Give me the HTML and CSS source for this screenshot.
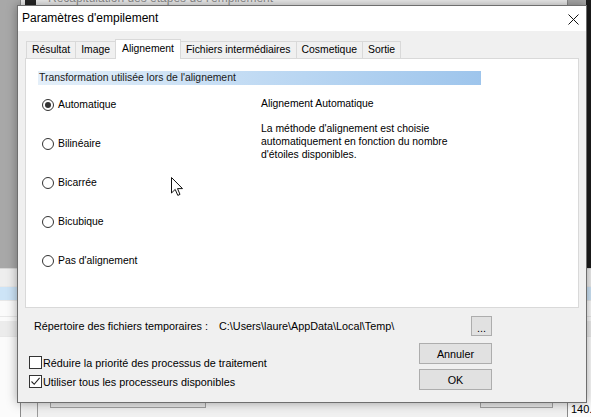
FILE: index.html
```html
<!DOCTYPE html>
<html>
<head>
    <title>Paramètres d'empilement</title>
    <link rel="stylesheet" href="styles.css">
</head>
<body>
    <div class="desktop">
        <!-- main window behind everything: grey pane + file list -->
        <div class="gray-pane"></div>
        <div class="main-list">
            <div class="list-row row-head"></div>
            <div class="list-row row-sel"></div>
            <div class="list-row"></div>
            <div class="list-row row-alt"></div>
            <span class="list-value">140.</span>
        </div>

        <!-- summary window, mostly hidden by the dialog -->
        <div class="back-window">
            <div class="back-titlebar">
                <span class="back-icon"></span>
                <span class="back-title">Récapitulation des étapes de l'empilement</span>
            </div>
            <div class="back-line"></div>
            <div class="back-btn back-btn-left"></div>
            <div class="back-btn back-btn-right"></div>
        </div>

        <div class="dialog">
            <div class="titlebar">
                <span class="title">Paramètres d'empilement</span>
                <svg class="close" width="11" height="11" viewBox="0 0 11 11">
                    <path d="M0.5 0.5 L10.5 10.5 M10.5 0.5 L0.5 10.5" stroke="#111" stroke-width="1" fill="none"/>
                </svg>
            </div>

            <div class="dialog-body">
                <div class="tabs">
                    <div class="tab">Résultat</div>
                    <div class="tab">Image</div>
                    <div class="tab active">Alignement</div>
                    <div class="tab">Fichiers intermédiaires</div>
                    <div class="tab">Cosmetique</div>
                    <div class="tab">Sortie</div>
                </div>

                <div class="tab-panel">
                    <div class="group-header">Transformation utilisée lors de l'alignement</div>
                    <div class="options">
                        <div class="radios">
                            <label class="radio-row"><span class="radio checked"></span>Automatique</label>
                            <label class="radio-row"><span class="radio"></span>Bilinéaire</label>
                            <label class="radio-row"><span class="radio"></span>Bicarrée</label>
                            <label class="radio-row"><span class="radio"></span>Bicubique</label>
                            <label class="radio-row"><span class="radio"></span>Pas d'alignement</label>
                        </div>
                        <div class="desc">
                            <div class="desc-title">Alignement Automatique</div>
                            <p class="desc-text">La méthode d'alignement est choisie<br>automatiquement en fonction du nombre<br>d'étoiles disponibles.</p>
                        </div>
                    </div>
                </div>

                <div class="dir-row">
                    <span>Répertoire des fichiers temporaires :</span>
                    <span class="dir-path">C:\Users\laure\AppData\Local\Temp\</span>
                    <button class="btn btn-browse">...</button>
                </div>

                <div class="bottom-row">
                    <div class="checks">
                        <label class="check-row"><span class="checkbox"></span>Réduire la priorité des processus de traitement</label>
                        <label class="check-row">
                            <span class="checkbox">
                                <svg width="11" height="11" viewBox="0 0 11 11">
                                    <path d="M1.5 5.5 L4.2 8.3 L9.6 1.8" stroke="#222" stroke-width="1.1" fill="none"/>
                                </svg>
                            </span>Utiliser tous les processeurs disponibles
                        </label>
                    </div>
                    <div class="actions">
                        <button class="btn">Annuler</button>
                        <button class="btn">OK</button>
                    </div>
                </div>
            </div>
        </div>

        <!-- mouse pointer -->
        <svg class="cursor" width="13" height="20" viewBox="0 0 13 20">
            <path d="M0.5 0.5 L0.5 16 L4.2 12.4 L6.8 18.4 L9 17.4 L6.5 11.6 L11.5 11.6 Z" fill="#fff" stroke="#111" stroke-width="1"/>
        </svg>
    </div>
</body>
</html>
```

FILE: styles.css
```css
* {
    box-sizing: border-box;
}
body {
    margin: 0;
    width: 591px;
    height: 417px;
    overflow: hidden;
    background: #1c1c1c;
    font-family: "Liberation Sans", Arial, sans-serif;
    color: #000;
}
.desktop {
    position: relative;
    width: 591px;
    height: 417px;
    overflow: hidden;
}

/* background windows */
.gray-pane {
    position: absolute;
    left: 0;
    top: 0;
    width: 586px;
    height: 268px;
    background: #a8a8a8;
}
.main-list {
    position: absolute;
    left: 0;
    top: 268px;
    width: 591px;
    height: 149px;
    background: #fbfbfb;
    border-top: 1px solid #d6d6d6;
}
.list-row {
    height: 16px;
    border-bottom: 1px solid #e8e8e8;
}
.row-head {
    height: 18px;
    background: #eeeeee;
}
.row-sel {
    height: 14px;
    background: #cde4f7;
}
.row-alt {
    margin-top: 4px;
    background: #ececec;
}
.list-value {
    position: absolute;
    left: 571px;
    top: 134px;
    font-size: 11px;
}
.back-window {
    position: absolute;
    left: 20px;
    top: -25px;
    width: 548px;
    height: 445px;
    background: #f0f0f0;
    border: 1px solid #8a8a8a;
}
.back-titlebar {
    display: flex;
    align-items: flex-end;
    height: 33px;
    background: #ececec;
}
.back-icon {
    width: 11px;
    height: 16px;
    margin-left: 4px;
    background: #262626;
}
.back-title {
    margin-left: 12px;
    margin-bottom: 4px;
    font-size: 12px;
    line-height: 14px;
    color: #8c8c8c;
}
.back-line {
    position: absolute;
    left: 16px;
    top: 425px;
    width: 1px;
    height: 30px;
    background: #9a9a9a;
}
.back-btn {
    position: absolute;
    top: 405px;
    height: 27px;
    border: 1px solid #a0a0a0;
    background: #e6e6e6;
}
.back-btn-left {
    left: 29px;
    width: 156px;
}
.back-btn-right {
    left: 459px;
    width: 73px;
}

/* dialog */
.dialog {
    position: absolute;
    left: 17px;
    top: 5px;
    width: 570px;
    height: 398px;
    border: 1px solid #6e6e6e;
    background: #f0f0f0;
    box-shadow: 0 0 10px rgba(0, 0, 0, 0.35);
    display: flex;
    flex-direction: column;
}
.titlebar {
    display: flex;
    align-items: center;
    justify-content: space-between;
    height: 25px;
    padding: 0 7px 0 4px;
    background: #fff;
    font-size: 12px;
}
.title {
    margin-top: -1px;
}
.close {
    margin-top: 1px;
}
.dialog-body {
    flex: 1;
    padding: 8px 7px 0 7px;
    font-size: 10.4px;
}

.tabs {
    display: flex;
    align-items: flex-end;
    height: 19px;
    padding-left: 1px;
    position: relative;
    z-index: 1;
}
.tab {
    height: 17px;
    line-height: 16px;
    padding: 0 5px;
    border: 1px solid #d9d9d9;
    border-bottom: none;
    border-right: none;
    background: #f0f0f0;
}
.tab:last-child {
    border-right: 1px solid #d9d9d9;
}
.tab.active {
    height: 20px;
    line-height: 17px;
    margin-bottom: -1px;
    padding: 0 6px;
    background: #fff;
    border-right: 1px solid #d9d9d9;
}
.tab.active + .tab {
    border-left: none;
}

.tab-panel {
    height: 250px;
    border: 1px solid #d9d9d9;
    background: #fff;
    padding: 12px 97px 0 12px;
}
.group-header {
    height: 14px;
    line-height: 14px;
    padding-left: 1px;
    background: linear-gradient(to right, #e4eff9, #b9d6f2 60%, #9ec5ec);
    color: #1a1a1a;
}
.options {
    display: flex;
}
.radios {
    width: 223px;
    padding-left: 4px;
}
.radio-row {
    display: flex;
    align-items: center;
    height: 39px;
}
.radio {
    width: 12px;
    height: 12px;
    margin-right: 4px;
    border: 1px solid #333;
    border-radius: 50%;
    background: #fff;
    display: flex;
    align-items: center;
    justify-content: center;
}
.radio.checked::after {
    content: "";
    width: 6px;
    height: 6px;
    border-radius: 50%;
    background: #333;
}
.desc {
    padding-top: 12px;
    line-height: 13px;
}
.desc-text {
    margin: 12px 0 0;
}

.dir-row {
    display: flex;
    align-items: center;
    height: 20px;
    margin-top: 8px;
    padding: 0 87px 0 9px;
    font-size: 10.8px;
}
.dir-path {
    margin-left: 11px;
}
.btn {
    font-family: inherit;
    font-size: 10.8px;
    color: #000;
    width: 73px;
    height: 21px;
    padding: 0;
    border: 1px solid #adadad;
    background: #e1e1e1;
}
.btn-browse {
    width: 21px;
    height: 20px;
    margin-left: auto;
    padding-top: 4px;
}
.bottom-row {
    display: flex;
    justify-content: space-between;
    margin-top: 7px;
    padding: 0 87px 0 4px;
    font-size: 10.8px;
}
.checks {
    padding-top: 10px;
}
.check-row {
    display: flex;
    align-items: center;
    height: 19px;
}
.checkbox {
    width: 13px;
    height: 13px;
    margin-right: 1px;
    border: 1px solid #333;
    background: #fff;
    display: flex;
    align-items: center;
    justify-content: center;
}
.actions {
    display: flex;
    flex-direction: column;
    gap: 5px;
}

.cursor {
    position: absolute;
    left: 171px;
    top: 177px;
}
```
